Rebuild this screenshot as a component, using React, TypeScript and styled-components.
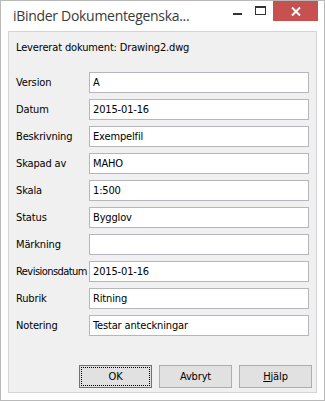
import React from "react";
import styled, { createGlobalStyle } from "styled-components";

const Global = createGlobalStyle`
  html, body { margin: 0; padding: 0; background: #ffffff; }
  * { box-sizing: border-box; }
`;

const Window = styled.div`
  width: 325px;
  height: 401px;
  background: #ffffff;
  border: 1px solid #b9b9b9;
  display: flex;
  flex-direction: column;
  font-family: "DejaVu Sans Condensed", "Liberation Sans", Arial, sans-serif;
`;

const TitleBar = styled.div`
  height: 30px;
  display: flex;
  align-items: flex-start;
`;

const Title = styled.div`
  font-family: "Open Sans", "Noto Sans", sans-serif;
  font-size: 14px;
  letter-spacing: -0.3px;
  color: #3a3a3a;
  padding: 5px 0 0 12px;
  flex: 1;
  white-space: nowrap;
`;

const Controls = styled.div`
  display: flex;
  align-items: flex-start;
  margin-right: 6px;
`;

const CtrlBtn = styled.div<{ $w: number; $close?: boolean }>`
  width: ${(p) => p.$w}px;
  height: 20px;
  display: flex;
  align-items: center;
  justify-content: center;
  background: ${(p) => (p.$close ? "#c75050" : "transparent")};
`;

const Client = styled.div`
  flex: 1;
  margin: 0 7px 7px 7px;
  background: #f0f0f0;
  border: 1px solid #d4d4d4;
  padding: 9px 7px 0 7px;
  display: flex;
  flex-direction: column;
  font-size: 11px;
  letter-spacing: -0.15px;
  color: #000;
`;

const Header = styled.div`
  height: 13px;
  line-height: 13px;
`;

const Form = styled.div`
  margin-top: 18px;
  display: grid;
  grid-template-columns: 73px 1fr;
  row-gap: 6px;
  align-items: center;
`;

const Label = styled.div<{ $tight?: boolean }>`
  white-space: nowrap;
  letter-spacing: ${(p) => (p.$tight ? "-0.55px" : "-0.15px")};
`;

const Field = styled.div`
  height: 21px;
  background: #ffffff;
  border: 1px solid #b4b6bc;
  padding: 0 3px;
  display: flex;
  align-items: center;
  white-space: nowrap;
`;

const Buttons = styled.div`
  margin-top: 29px;
  margin-right: -3px;
  display: flex;
  justify-content: flex-end;
  gap: 7px;
`;

const Button = styled.div<{ $def?: boolean }>`
  width: 73px;
  height: 23px;
  background: #e1e1e1;
  border: 1px solid ${(p) => (p.$def ? "#3c7fb1" : "#adadad")};
  display: flex;
  align-items: center;
  justify-content: center;
  padding: 1px;
`;

const Focus = styled.div<{ $on?: boolean }>`
  width: 100%;
  height: 100%;
  border: 1px dotted ${(p) => (p.$on ? "#000" : "transparent")};
  display: flex;
  align-items: center;
  justify-content: center;
`;

const rows: [string, string][] = [
  ["Version", "A"],
  ["Datum", "2015-01-16"],
  ["Beskrivning", "Exempelfil"],
  ["Skapad av", "MAHO"],
  ["Skala", "1:500"],
  ["Status", "Bygglov"],
  ["Märkning", ""],
  ["Revisionsdatum", "2015-01-16"],
  ["Rubrik", "Ritning"],
  ["Notering", "Testar anteckningar"],
];

export default function App() {
  return (
    <>
      <Global />
      <Window>
        <TitleBar>
          <Title>iBinder Dokumentegenska...</Title>
          <Controls>
            <CtrlBtn $w={20}>
              <svg width="9" height="10" viewBox="0 0 9 10">
                <rect x="0" y="7" width="9" height="2" fill="#333" />
              </svg>
            </CtrlBtn>
            <CtrlBtn $w={26}>
              <svg width="11" height="10" viewBox="0 0 11 10">
                <rect x="0.5" y="0.5" width="10" height="8" fill="none" stroke="#333" />
                <rect x="0.5" y="0.5" width="10" height="1.5" fill="#333" />
              </svg>
            </CtrlBtn>
            <CtrlBtn $w={45} $close>
              <svg width="10" height="9" viewBox="0 0 10 9">
                <path d="M1 0.5 L9 8.5 M9 0.5 L1 8.5" stroke="#fff" strokeWidth="2" />
              </svg>
            </CtrlBtn>
          </Controls>
        </TitleBar>
        <Client>
          <Header>Levererat dokument: Drawing2.dwg</Header>
          <Form>
            {rows.map(([l, v]) => (
              <React.Fragment key={l}>
                <Label $tight={l.length > 12}>{l}</Label>
                <Field>{v}</Field>
              </React.Fragment>
            ))}
          </Form>
          <Buttons>
            <Button $def>
              <Focus $on>OK</Focus>
            </Button>
            <Button>
              <Focus>Avbryt</Focus>
            </Button>
            <Button>
              <Focus>
                <span>
                  <u>H</u>jälp
                </span>
              </Focus>
            </Button>
          </Buttons>
        </Client>
      </Window>
    </>
  );
}
